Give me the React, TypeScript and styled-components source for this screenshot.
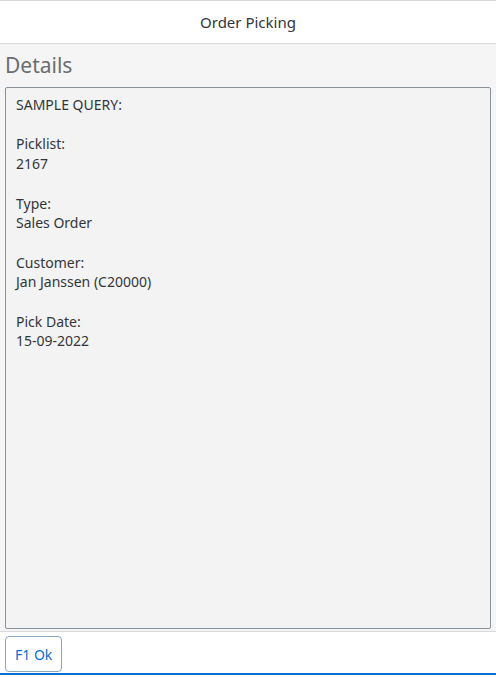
import React from "react";
import styled, { createGlobalStyle } from "styled-components";

const Global = createGlobalStyle`
  html, body { margin: 0; padding: 0; background: #ffffff; }
  body { font-family: "Noto Sans", "Open Sans", Arial, sans-serif; }
  * { box-sizing: border-box; }
`;

const Page = styled.div`
  width: 496px;
  height: 677px;
  display: flex;
  flex-direction: column;
  background: #ffffff;
  border-top: 1px solid #d9d9d9;
`;

const Header = styled.header`
  height: 43px;
  display: flex;
  align-items: center;
  justify-content: center;
  background: #ffffff;
  border-bottom: 1px solid #d9d9d9;
  color: #32363a;
  font-size: 15px;
`;

const Content = styled.main`
  flex: 1;
  display: flex;
  flex-direction: column;
  background: #f5f5f5;
  padding: 6px 5px 2px 5px;
  min-height: 0;
`;

const Title = styled.h2`
  margin: 0 0 7px 0;
  font-size: 21px;
  font-weight: 400;
  color: #6a6d70;
  line-height: 30px;
`;

const DetailBox = styled.div`
  flex: 1;
  border: 1px solid #89919a;
  border-radius: 2px;
  background: #f3f3f3;
  padding: 7px 10px;
  color: #32363a;
  font-size: 14px;
  line-height: 19.7px;
  white-space: pre-wrap;
`;

const Footer = styled.footer`
  height: 42px;
  display: flex;
  align-items: flex-start;
  padding: 4px 5px 0 5px;
  border-top: 1px solid #d9d9d9;
  background: #ffffff;
`;

const Button = styled.button`
  height: 36px;
  padding: 0 9px;
  background: #ffffff;
  border: 1px solid #89a6c7;
  border-radius: 4px;
  color: #0a6ed1;
  font-family: inherit;
  font-size: 14px;
  cursor: pointer;
`;

const FocusLine = styled.div`
  height: 2px;
  background: #0a6ed1;
  margin-bottom: 2px;
`;

const text = `SAMPLE QUERY:

Picklist:
2167

Type:
Sales Order

Customer:
Jan Janssen (C20000)

Pick Date:
15-09-2022`;

export default function App() {
  return (
    <>
      <Global />
      <Page>
        <Header>Order Picking</Header>
        <Content>
          <Title>Details</Title>
          <DetailBox>{text}</DetailBox>
        </Content>
        <Footer>
          <Button>F1 Ok</Button>
        </Footer>
        <FocusLine />
      </Page>
    </>
  );
}
